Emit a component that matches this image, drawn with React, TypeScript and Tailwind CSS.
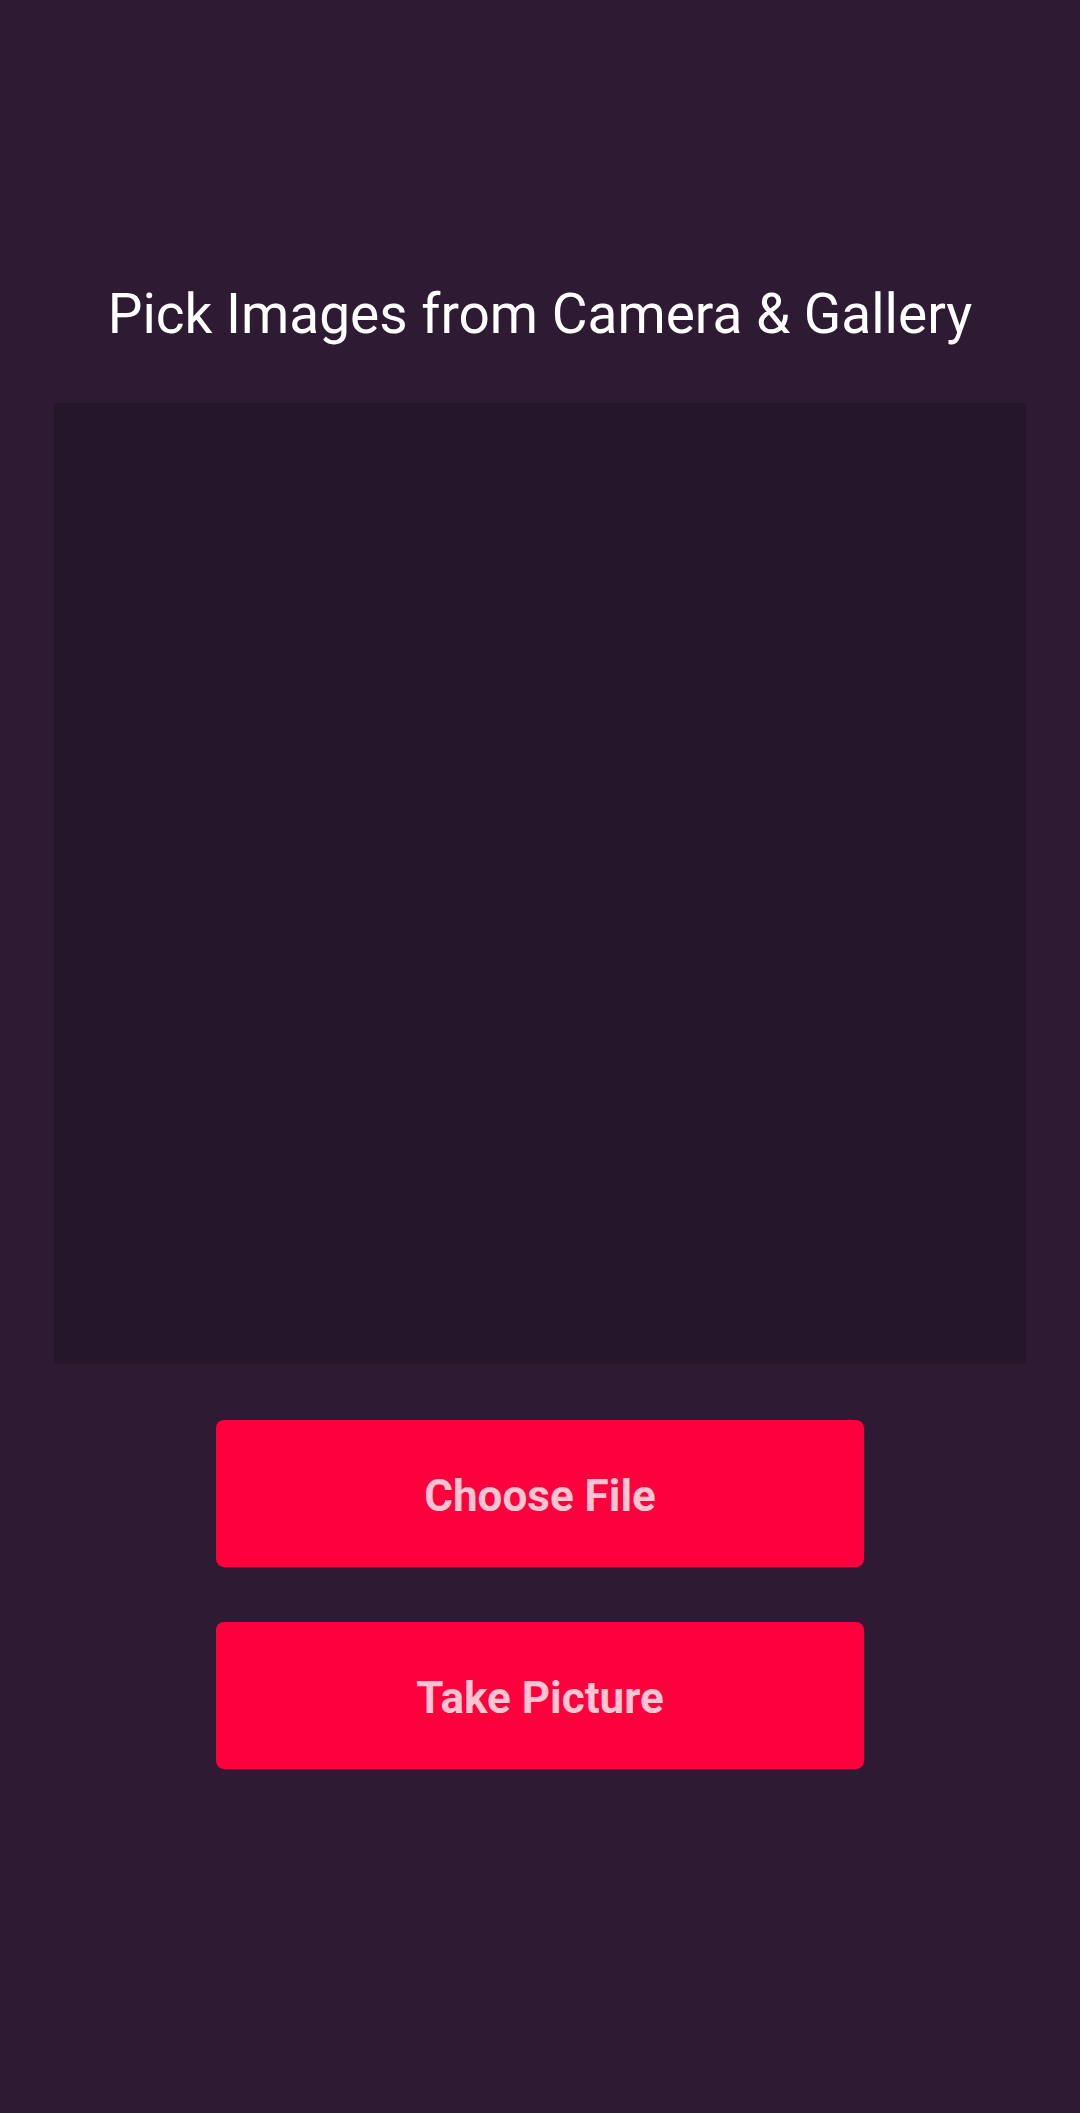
export default function App() {
  return (
    <div
      className="min-h-[2113px] w-full bg-[#2f1a34] flex flex-col items-center pt-[283px]"
      style={{ fontFamily: "Roboto, 'Noto Sans', sans-serif" }}
    >
      <h1 className="text-[55px] leading-[63px] font-normal text-white text-center">
        Pick Images from Camera &amp; Gallery
      </h1>

      <div className="mt-[57px] w-[972px] h-[961px] bg-[#251629]" />

      <div className="mt-[56px] flex flex-col gap-[55px]">
        <button className="w-[648px] h-[147px] rounded-[8px] bg-[#ff003d] text-[#ffc4d2] text-[44px] font-bold pt-[4px]">
          Choose File
        </button>
        <button className="w-[648px] h-[147px] rounded-[8px] bg-[#ff003d] text-[#ffc4d2] text-[44px] font-bold pt-[4px]">
          Take Picture
        </button>
      </div>
    </div>
  )
}
